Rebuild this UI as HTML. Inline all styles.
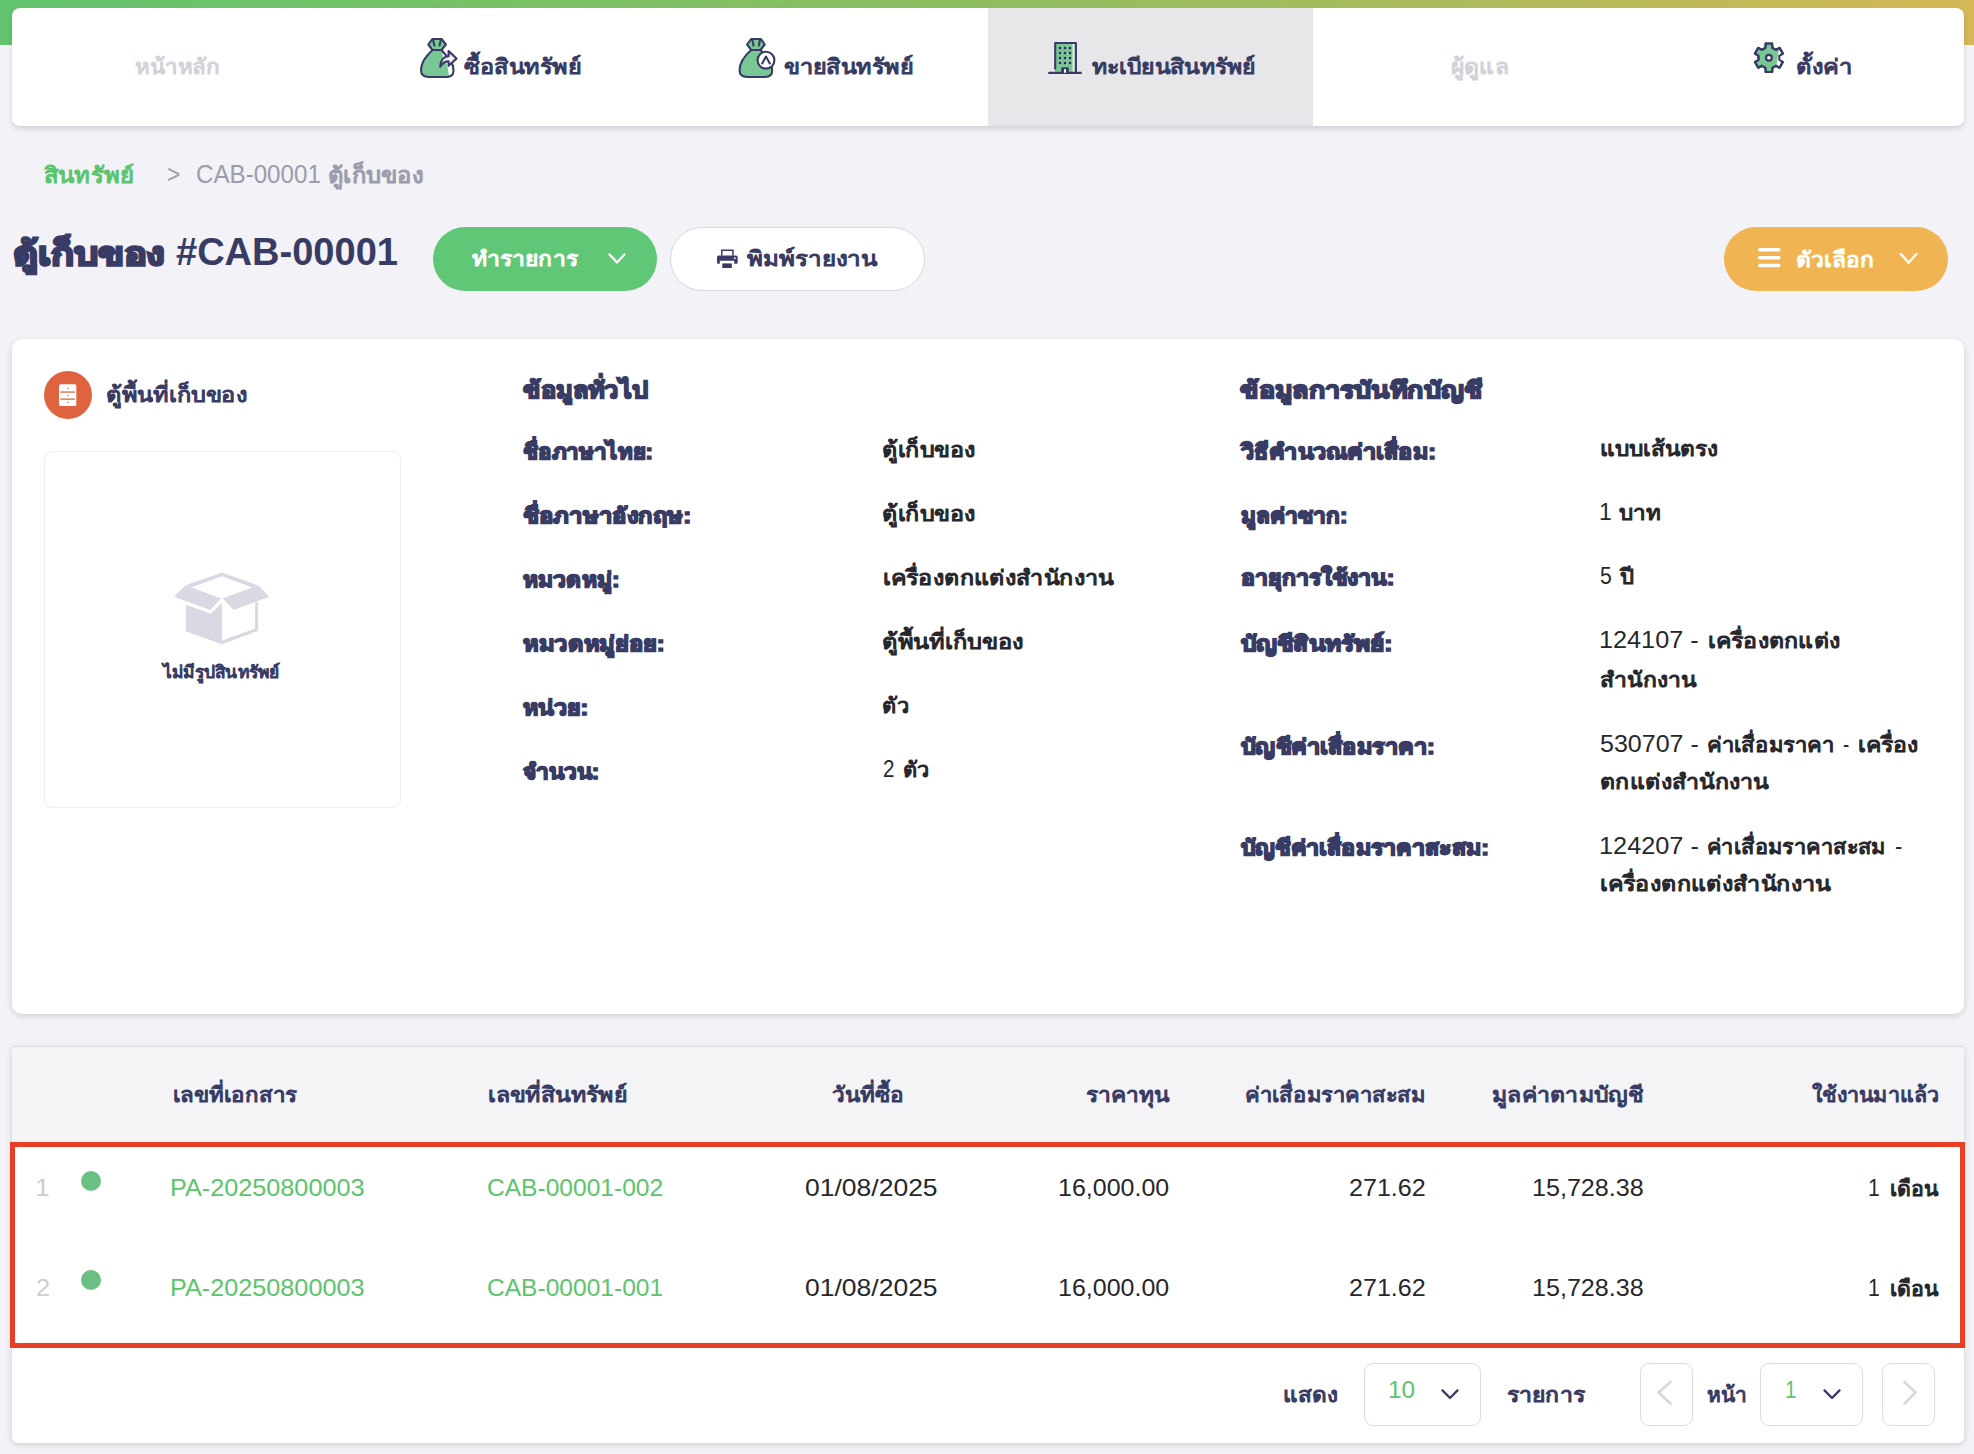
<!DOCTYPE html>
<html lang="th"><head><meta charset="utf-8"><title>ตู้เก็บของ #CAB-00001</title><style>
*{box-sizing:border-box;margin:0;padding:0}
html,body{width:1974px;height:1454px;overflow:hidden}
body{background:#f2f2f7;font-family:"Liberation Sans",sans-serif;position:relative}
.a{position:absolute}
.t{position:absolute;white-space:nowrap;line-height:1;transform-origin:0 0}
.topbar{left:0;top:0;width:1974px;height:45px;background:linear-gradient(90deg,#62c46e 0%,#8fbe60 50%,#b0bb5c 76%,#d5b756 100%)}
.nav{left:12px;top:8px;width:1952px;height:118px;background:#fff;border-radius:8px;box-shadow:0 3px 5px rgba(40,40,60,.16);overflow:hidden;display:flex}
.nav .tab{width:325.33px;height:118px;flex:none}
.nav .tab.on{background:#e7e7e9}
.btn{top:227px;height:64px;border-radius:32px}
.card{background:#fff;box-shadow:0 2px 6px rgba(0,0,0,.15)}
.pbox{top:1363px;height:63px;border:1px solid #dcdce8;border-radius:9px;background:#fff}
</style></head><body>
<div class="a topbar"></div>
<nav class="a nav"><div class="tab"></div><div class="tab"></div><div class="tab"></div><div class="tab on"></div><div class="tab"></div><div class="tab"></div></nav>
<div class="a btn" style="left:433px;width:224px;background:#5fc776"></div>
<div class="a btn" style="left:670px;width:255px;background:#fff;border:1px solid #d9d8e4"></div>
<div class="a btn" style="left:1724px;width:224px;background:#f0b552"></div>
<div class="a card" style="left:12px;top:339px;width:1952px;height:675px;border-radius:10px"></div>
<div class="a" style="left:44px;top:451px;width:357px;height:357px;border:1px solid #eeeef3;border-radius:8px"></div>
<div class="a card" style="left:12px;top:1046px;width:1952px;height:397px;border-radius:0 0 6px 6px"></div>
<div class="a" style="left:12px;top:1046px;width:1952px;height:96px;background:#f4f4f7;border-top:1px solid #dcdce8"></div>
<div class="a" style="left:10px;top:1142px;width:1955px;height:206px;border:5px solid #e83e25;background:#fff"></div>
<div class="a pbox" style="left:1364px;width:117px"></div>
<div class="a pbox" style="left:1640px;width:53px"></div>
<div class="a pbox" style="left:1760px;width:103px"></div>
<div class="a pbox" style="left:1882px;width:53px"></div>
<svg class="a" style="left:418px;top:36px" width="42" height="44" viewBox="0 0 42 44" ><path d="M14.5,14 C9,19 3,26 3,34 C3,39.5 6.5,41 11,41 L28.5,41 C33,41 35.5,39 35.5,34.5 C35.5,31 34.5,28 33,25.5 L23.5,14 Z" fill="#79c794"/><path d="M26,16.5 L33,25 C34.5,28 35.3,31 35.3,34.5 C35.3,38 34,40 31,40.6 C30.5,34 29,26 24,18 Z" fill="#fff"/><path d="M14.5,14 C9,19 3,26 3,34 C3,39.5 6.5,41 11,41 L28.5,41 C33,41 35.5,39 35.5,34.5 C35.5,31 34.5,28 33,25.5 M23.5,14 L29.5,21" fill="none" stroke="#393a68" stroke-width="2.1" stroke-linejoin="round" stroke-linecap="round"/><path d="M14.3,3 L23.6,3 L27.9,8.5 L23.5,14 L14.5,14 L10.3,8.5 Z" fill="#79c794" fill="none" stroke="#393a68" stroke-width="2.1" stroke-linejoin="round" stroke-linecap="round"/><path d="M15.2,4.6 L16.4,9.6 M22.7,4.6 L21.5,9.6" fill="none" stroke="#393a68" stroke-width="2.1" stroke-linejoin="round" stroke-linecap="round"/><path d="M22.2,30.6 C22.4,24.5 25.8,20.6 30.6,20.2 L30.6,15 L38.5,22.6 L30.6,29.8 L30.6,25.4 C27,25.4 24,27.6 22.2,30.6 Z" fill="#f2f2f4" fill="none" stroke="#393a68" stroke-width="2.1" stroke-linejoin="round" stroke-linecap="round"/></svg>
<svg class="a" style="left:737px;top:36px" width="42" height="44" viewBox="0 0 42 44" ><path d="M14.2,14 C8.5,19 2.6,26 2.6,34 C2.6,39.5 6,41 10.5,41 L28,41 C32.5,41 35.2,39 35.2,34.5 C35.2,31 34,28 32.5,25.5 L23.5,14 Z" fill="#79c794" fill="none" stroke="#393a68" stroke-width="2.1" stroke-linejoin="round" stroke-linecap="round"/><path d="M14.1,3 L24,3 L27.7,8.5 L23.5,14 L14.2,14 L10.1,8.5 Z" fill="#79c794" fill="none" stroke="#393a68" stroke-width="2.1" stroke-linejoin="round" stroke-linecap="round"/><path d="M15.4,4.6 L16.5,9.6 M22.9,4.6 L21.8,9.6" fill="none" stroke="#393a68" stroke-width="2.1" stroke-linejoin="round" stroke-linecap="round"/><circle cx="29" cy="24.2" r="8.4" fill="#fff" fill="none" stroke="#393a68" stroke-width="2.1" stroke-linejoin="round" stroke-linecap="round"/><path d="M25.2,27.4 L29,20.6 L32.8,27.4" fill="none" stroke="#393a68" stroke-width="2.1" stroke-linejoin="round" stroke-linecap="round"/></svg>
<svg class="a" style="left:1048px;top:40px" width="34" height="35" viewBox="0 0 34 35" ><rect x="7" y="3" width="20" height="30" fill="#79c794"/><rect x="24.6" y="3" width="2" height="30" fill="#eef2ee"/><path d="M7.2,28.7 L7.2,3 L27.9,3 L27.9,32.9 M1.1,32.9 L32.9,32.9" fill="none" stroke="#393a68" stroke-width="2.1" stroke-linejoin="round" stroke-linecap="round"/><rect x="10.9" y="6.9" width="2.2" height="2.2" fill="#2e2b5c"/><rect x="10.9" y="11.9" width="2.2" height="2.2" fill="#2e2b5c"/><rect x="10.9" y="16.9" width="2.2" height="2.2" fill="#2e2b5c"/><rect x="10.9" y="21.9" width="2.2" height="2.2" fill="#2e2b5c"/><rect x="15.9" y="6.9" width="2.2" height="2.2" fill="#2e2b5c"/><rect x="15.9" y="11.9" width="2.2" height="2.2" fill="#2e2b5c"/><rect x="15.9" y="16.9" width="2.2" height="2.2" fill="#2e2b5c"/><rect x="15.9" y="21.9" width="2.2" height="2.2" fill="#2e2b5c"/><rect x="20.9" y="6.9" width="2.2" height="2.2" fill="#2e2b5c"/><rect x="20.9" y="11.9" width="2.2" height="2.2" fill="#2e2b5c"/><rect x="20.9" y="16.9" width="2.2" height="2.2" fill="#2e2b5c"/><rect x="20.9" y="21.9" width="2.2" height="2.2" fill="#2e2b5c"/><path d="M13.2,33 L13.2,28.2 Q13.2,27.3 14.1,27.3 L19.9,27.3 Q20.8,27.3 20.8,28.2 L20.8,33 Z" fill="#393a68"/><rect x="16" y="29.2" width="2" height="3.5" fill="#fff"/></svg>
<svg class="a" style="left:1752px;top:40px" width="34" height="36" viewBox="0 0 34 36" ><polygon points="13.45,7.78 13.62,3.57 20.18,3.57 20.35,7.78 23.85,9.80 27.58,7.84 30.86,13.53 27.31,15.78 27.31,19.82 30.86,22.07 27.58,27.76 23.85,25.80 20.35,27.82 20.18,32.03 13.62,32.03 13.45,27.82 9.95,25.80 6.22,27.76 2.94,22.07 6.49,19.82 6.49,15.78 2.94,13.53 6.22,7.84 9.95,9.80" fill="#79c794" fill="none" stroke="#393a68" stroke-width="2.1" stroke-linejoin="round" stroke-linecap="round"/><path d="M26.8,10.5 L24.6,24.8 L27,26.2 L30,20 L28.4,11.5 Z" fill="#fff"/><polygon points="13.45,7.78 13.62,3.57 20.18,3.57 20.35,7.78 23.85,9.80 27.58,7.84 30.86,13.53 27.31,15.78 27.31,19.82 30.86,22.07 27.58,27.76 23.85,25.80 20.35,27.82 20.18,32.03 13.62,32.03 13.45,27.82 9.95,25.80 6.22,27.76 2.94,22.07 6.49,19.82 6.49,15.78 2.94,13.53 6.22,7.84 9.95,9.80" fill="none" fill="none" stroke="#393a68" stroke-width="2.1" stroke-linejoin="round" stroke-linecap="round"/><circle cx="16.9" cy="17.8" r="2.9" fill="#fff" stroke="#393a68" stroke-width="2.2"/></svg>
<svg class="a" style="left:715px;top:247px" width="25" height="23" viewBox="0 0 25 23" ><path d="M6,2.6 L18.7,2.6 L18.7,8.4 L17.2,8.4 L17.2,4.1 L7.5,4.1 L7.5,8.4 L6,8.4 Z" fill="#393a68"/><path d="M3.6,8.4 L21,8.4 Q22.7,8.4 22.7,10.2 L22.7,15.5 Q22.7,16.8 21.2,16.8 L19.2,16.8 L19.2,13.7 L4.8,13.7 L4.8,16.8 L3.4,16.8 Q2,16.8 2,15.3 L2,10.2 Q2,8.4 3.6,8.4 Z" fill="#393a68"/><rect x="19" y="10.4" width="1.6" height="1.6" fill="#fff"/><rect x="7.3" y="16.4" width="9.5" height="4.6" fill="#393a68"/></svg>
<svg class="a" style="left:607px;top:251px" width="20" height="16" viewBox="0 0 20 16" ><path d="M2.5,3.5 L10,11.5 L17.5,3.5" fill="none" stroke="#fff" stroke-width="2.3" stroke-linecap="round" stroke-linejoin="round"/></svg>
<svg class="a" style="left:1898px;top:251px" width="20" height="16" viewBox="0 0 20 16" ><path d="M2.8,3 L10.6,11.8 L18.4,3" fill="none" stroke="#fff" stroke-width="2.3" stroke-linecap="round" stroke-linejoin="round"/></svg>
<svg class="a" style="left:1756px;top:246px" width="27" height="23" viewBox="0 0 27 23" ><rect x="2" y="2" width="22.5" height="3.4" rx="1.7" fill="#fff"/><rect x="2" y="10" width="22.5" height="3.4" rx="1.7" fill="#fff"/><rect x="2" y="17.8" width="22.5" height="3.4" rx="1.7" fill="#fff"/></svg>
<div class="a" style="left:44px;top:371px;width:48px;height:48px;border-radius:50%;background:#e0633f"></div>
<svg class="a" style="left:56px;top:382px" width="24" height="26" viewBox="0 0 24 26" ><rect x="3" y="2.3" width="17.3" height="21.7" rx="1.6" fill="#fff"/><rect x="4.4" y="9.4" width="14.5" height="1.3" fill="#e0633f"/><rect x="4.4" y="16.5" width="14.5" height="1.3" fill="#e0633f"/><circle cx="11.8" cy="6.5" r="0.8" fill="#e0633f"/><circle cx="11.8" cy="13.7" r="0.8" fill="#e0633f"/><circle cx="11.8" cy="20.2" r="0.8" fill="#e0633f"/></svg>
<svg class="a" style="left:160px;top:560px" width="120" height="100" viewBox="0 0 120 100" ><path d="M25.4,25.3 L61.9,12.4 L98.3,25.3 L92.3,27.5 L61.9,16.2 L31.5,27.5 Z" fill="#d9d9e4"/><path d="M14.1,36.8 L25.4,25.3 L31.5,27.5 L61.2,38.2 L50.3,50.1 Z" fill="#d9d9e4"/><path d="M62.6,38.2 L92.3,27.5 L98.3,25.3 L109.4,36.8 L73.6,49.9 Z" fill="#d9d9e4"/><path d="M25.8,44.7 L50.9,53.8 L61.9,42.8 L61.9,84.2 L25.8,71.2 Z" fill="#d9d9e4"/><path d="M61.9,80.6 L95.1,68.6 L95.1,42.9 L98.1,41.8 L98.1,70.9 L61.9,84.2 Z" fill="#d9d9e4"/></svg>
<div class="a" style="left:80.5px;top:1171px;width:20px;height:20px;border-radius:50%;background:#6cbf82"></div>
<div class="a" style="left:80.5px;top:1270px;width:20px;height:20px;border-radius:50%;background:#6cbf82"></div>
<svg class="a" style="left:1438px;top:1385px" width="24" height="20" viewBox="0 0 24 20" ><path d="M4.5,5.4 L12,13 L19.5,5.4" fill="none" stroke="#393a68" stroke-width="2.3" stroke-linecap="round" stroke-linejoin="round"/></svg>
<svg class="a" style="left:1820px;top:1385px" width="24" height="20" viewBox="0 0 24 20" ><path d="M4.5,5.4 L12,13 L19.5,5.4" fill="none" stroke="#393a68" stroke-width="2.3" stroke-linecap="round" stroke-linejoin="round"/></svg>
<svg class="a" style="left:1654px;top:1379px" width="24" height="30" viewBox="0 0 24 30" ><path d="M16.5,3 L4.5,13.5 L16.5,24.5" fill="none" stroke="#d8d8e2" stroke-width="2.8" stroke-linecap="round" stroke-linejoin="round"/></svg>
<svg class="a" style="left:1896px;top:1379px" width="24" height="30" viewBox="0 0 24 30" ><path d="M8.5,3 L19.5,13.5 L8.5,24.5" fill="none" stroke="#d8d8e2" stroke-width="2.8" stroke-linecap="round" stroke-linejoin="round"/></svg>
<span class="t" id="nav_home" style="left:135.07px;top:56.31px;font-size:21px;color:#d2d2d8;-webkit-text-stroke-width:1.1px;--w:85.03px;transform:scaleX(0.6749)">หน้าหลัก</span>
<span class="t" id="nav_buy" style="left:463.63px;top:56.31px;font-size:21px;color:#383b64;-webkit-text-stroke-width:1.1px;--w:117.22px;transform:scaleX(0.5725)">ซื้อสินทรัพย์</span>
<span class="t" id="nav_sell" style="left:784.47px;top:56.31px;font-size:21px;color:#383b64;-webkit-text-stroke-width:1.1px;--w:129.38px;transform:scaleX(0.6846)">ขายสินทรัพย์</span>
<span class="t" id="nav_reg" style="left:1091.53px;top:56.31px;font-size:21px;color:#383b64;-webkit-text-stroke-width:1.1px;--w:163.50px;transform:scaleX(0.6488)">ทะเบียนสินทรัพย์</span>
<span class="t" id="nav_admin" style="left:1450.67px;top:56.31px;font-size:21px;color:#d2d2d8;-webkit-text-stroke-width:1.1px;--w:57.79px;transform:scaleX(0.5242)">ผู้ดูแล</span>
<span class="t" id="nav_set" style="left:1796.21px;top:56.31px;font-size:21px;color:#383b64;-webkit-text-stroke-width:1.1px;--w:56.25px;transform:scaleX(0.5102)">ตั้งค่า</span>
<span class="t" id="bc_1" style="left:44.35px;top:165.00px;font-size:22px;color:#5cc46c;-webkit-text-stroke-width:1.1px;--w:90.34px;transform:scaleX(0.6084)">สินทรัพย์</span>
<span class="t" id="bc_gt" style="left:166.93px;top:161.01px;font-size:26px;color:#9c9cac;--w:13.18px;transform:scaleX(0.8676)">></span>
<span class="t" id="bc_2a" style="left:196.35px;top:161.01px;font-size:26px;color:#9c9cac;--w:124.82px;transform:scaleX(0.9286)">CAB-00001</span>
<span class="t" id="bc_2b" style="left:328.36px;top:165.00px;font-size:22px;color:#9c9cac;-webkit-text-stroke-width:1.1px;--w:95.52px;transform:scaleX(0.5789)">ตู้เก็บของ</span>
<span class="t" id="title_a" style="left:12.77px;top:238.00px;font-size:32px;color:#383b64;font-weight:700;-webkit-text-stroke-width:2.4px;--w:152.41px;transform:scaleX(0.6350)">ตู้เก็บของ</span>
<span class="t" id="title_b" style="left:176.17px;top:232.01px;font-size:39px;color:#383b64;font-weight:700;--w:221.96px;transform:scaleX(0.9751)">#CAB-00001</span>
<span class="t" id="btn_act" style="left:471.87px;top:248.01px;font-size:21px;color:#ffffff;-webkit-text-stroke-width:1.1px;--w:105.71px;transform:scaleX(0.7457)">ทำรายการ</span>
<span class="t" id="btn_print" style="left:747.38px;top:248.01px;font-size:21px;color:#383b64;-webkit-text-stroke-width:1.1px;--w:129.94px;transform:scaleX(0.7500)">พิมพ์รายงาน</span>
<span class="t" id="btn_opt" style="left:1795.58px;top:248.51px;font-size:21px;color:#ffffff;-webkit-text-stroke-width:1.1px;--w:77.84px;transform:scaleX(0.6178)">ตัวเลือก</span>
<span class="t" id="cat" style="left:106.05px;top:383.81px;font-size:21px;color:#383b64;-webkit-text-stroke-width:1.1px;--w:141.14px;transform:scaleX(0.5271)">ตู้พื้นที่เก็บของ</span>
<span class="t" id="noimg" style="left:162.91px;top:663.81px;font-size:17px;color:#383b64;-webkit-text-stroke-width:1.1px;--w:116.61px;transform:scaleX(0.5380)">ไม่มีรูปสินทรัพย์</span>
<span class="t" id="h_gen" style="left:522.95px;top:379.01px;font-size:23px;color:#383b64;font-weight:700;-webkit-text-stroke-width:1.72px;--w:125.44px;transform:scaleX(0.6060)">ข้อมูลทั่วไป</span>
<span class="t" id="l_th" style="left:522.93px;top:440.81px;font-size:21px;color:#383b64;font-weight:700;-webkit-text-stroke-width:1.57px;--w:129.98px;transform:scaleX(0.7211)">ชื่อภาษาไทย:</span>
<span class="t" id="l_en" style="left:522.91px;top:504.71px;font-size:21px;color:#383b64;font-weight:700;-webkit-text-stroke-width:1.57px;--w:168.19px;transform:scaleX(0.7393)">ชื่อภาษาอังกฤษ:</span>
<span class="t" id="l_cat" style="left:522.93px;top:569.01px;font-size:21px;color:#383b64;font-weight:700;-webkit-text-stroke-width:1.57px;--w:96.53px;transform:scaleX(0.7258)">หมวดหมู่:</span>
<span class="t" id="l_sub" style="left:522.92px;top:632.61px;font-size:21px;color:#383b64;font-weight:700;-webkit-text-stroke-width:1.57px;--w:141.73px;transform:scaleX(0.7231)">หมวดหมู่ย่อย:</span>
<span class="t" id="l_unit" style="left:522.90px;top:696.71px;font-size:21px;color:#383b64;font-weight:700;-webkit-text-stroke-width:1.57px;--w:65.17px;transform:scaleX(0.7600)">หน่วย:</span>
<span class="t" id="l_qty" style="left:522.91px;top:760.71px;font-size:21px;color:#383b64;font-weight:700;-webkit-text-stroke-width:1.57px;--w:76.17px;transform:scaleX(0.7504)">จำนวน:</span>
<span class="t" id="v_th" style="left:881.69px;top:438.91px;font-size:21px;color:#26272c;-webkit-text-stroke-width:1.1px;--w:93.11px;transform:scaleX(0.5912)">ตู้เก็บของ</span>
<span class="t" id="v_en" style="left:881.69px;top:502.81px;font-size:21px;color:#26272c;-webkit-text-stroke-width:1.1px;--w:93.11px;transform:scaleX(0.5912)">ตู้เก็บของ</span>
<span class="t" id="v_cat" style="left:882.55px;top:566.61px;font-size:21px;color:#26272c;-webkit-text-stroke-width:1.1px;--w:230.61px;transform:scaleX(0.6655)">เครื่องตกแต่งสำนักงาน</span>
<span class="t" id="v_sub" style="left:881.80px;top:630.81px;font-size:21px;color:#26272c;-webkit-text-stroke-width:1.1px;--w:141.71px;transform:scaleX(0.5293)">ตู้พื้นที่เก็บของ</span>
<span class="t" id="v_unit" style="left:881.69px;top:694.81px;font-size:21px;color:#26272c;-webkit-text-stroke-width:1.1px;--w:26.93px;transform:scaleX(0.5700)">ตัว</span>
<span class="t" id="v_qty_a" style="left:882.90px;top:756.71px;font-size:24px;color:#26272c;--w:11.46px;transform:scaleX(0.8579)">2</span>
<span class="t" id="v_qty_b" style="left:902.62px;top:758.71px;font-size:21px;color:#26272c;-webkit-text-stroke-width:1.1px;--w:26.92px;transform:scaleX(0.5697)">ตัว</span>
<span class="t" id="h_acc" style="left:1240.36px;top:378.61px;font-size:23px;color:#383b64;font-weight:700;-webkit-text-stroke-width:1.72px;--w:243.07px;transform:scaleX(0.7045)">ข้อมูลการบันทึกบัญชี</span>
<span class="t" id="r_l1" style="left:1241.11px;top:441.01px;font-size:21px;color:#383b64;font-weight:700;-webkit-text-stroke-width:1.57px;--w:194.99px;transform:scaleX(0.6367)">วิธีคำนวณค่าเสื่อม:</span>
<span class="t" id="r_l2" style="left:1240.66px;top:504.61px;font-size:21px;color:#383b64;font-weight:700;-webkit-text-stroke-width:1.57px;--w:106.54px;transform:scaleX(0.7162)">มูลค่าซาก:</span>
<span class="t" id="r_l3" style="left:1240.66px;top:567.31px;font-size:21px;color:#383b64;font-weight:700;-webkit-text-stroke-width:1.57px;--w:153.35px;transform:scaleX(0.7242)">อายุการใช้งาน:</span>
<span class="t" id="r_l4" style="left:1241.26px;top:632.91px;font-size:21px;color:#383b64;font-weight:700;-webkit-text-stroke-width:1.57px;--w:151.41px;transform:scaleX(0.6655)">บัญชีสินทรัพย์:</span>
<span class="t" id="r_l5" style="left:1240.76px;top:736.01px;font-size:21px;color:#383b64;font-weight:700;-webkit-text-stroke-width:1.57px;--w:193.84px;transform:scaleX(0.6673)">บัญชีค่าเสื่อมราคา:</span>
<span class="t" id="r_l6" style="left:1240.71px;top:837.41px;font-size:21px;color:#383b64;font-weight:700;-webkit-text-stroke-width:1.57px;--w:248.06px;transform:scaleX(0.7017)">บัญชีค่าเสื่อมราคาสะสม:</span>
<span class="t" id="r_v1" style="left:1599.87px;top:438.21px;font-size:21px;color:#26272c;-webkit-text-stroke-width:1.1px;--w:117.74px;transform:scaleX(0.7475)">แบบเส้นตรง</span>
<span class="t" id="r_v2a" style="left:1598.90px;top:500.10px;font-size:24px;color:#26272c;--w:12.82px;transform:scaleX(0.9595)">1</span>
<span class="t" id="r_v2b" style="left:1619.37px;top:502.11px;font-size:21px;color:#26272c;-webkit-text-stroke-width:1.1px;--w:41.71px;transform:scaleX(0.8828)">บาท</span>
<span class="t" id="r_v3a" style="left:1600.03px;top:564.01px;font-size:24px;color:#26272c;--w:11.75px;transform:scaleX(0.8792)">5</span>
<span class="t" id="r_v3b" style="left:1620.02px;top:566.01px;font-size:21px;color:#26272c;-webkit-text-stroke-width:1.1px;--w:13.69px;transform:scaleX(0.4345)">ปี</span>
<span class="t" id="r_v4a1" style="left:1599.16px;top:628.10px;font-size:24px;color:#26272c;--w:99.64px;transform:scaleX(1.0516)">124107 -</span>
<span class="t" id="r_v4a2" style="left:1707.75px;top:630.11px;font-size:21px;color:#26272c;-webkit-text-stroke-width:1.1px;--w:132.30px;transform:scaleX(0.6462)">เครื่องตกแต่ง</span>
<span class="t" id="r_v4b" style="left:1599.98px;top:669.21px;font-size:21px;color:#26272c;-webkit-text-stroke-width:1.1px;--w:96.11px;transform:scaleX(0.6780)">สำนักงาน</span>
<span class="t" id="r_v5a1" style="left:1600.46px;top:732.21px;font-size:24px;color:#26272c;--w:98.79px;transform:scaleX(1.0426)">530707 -</span>
<span class="t" id="r_v5a2" style="left:1706.58px;top:734.21px;font-size:21px;color:#26272c;-webkit-text-stroke-width:1.1px;--w:127.43px;transform:scaleX(0.6224)">ค่าเสื่อมราคา</span>
<span class="t" id="r_v5a3" style="left:1843.20px;top:732.21px;font-size:24px;color:#26272c;--w:6.25px;transform:scaleX(0.7810)">-</span>
<span class="t" id="r_v5a4" style="left:1858.30px;top:734.21px;font-size:21px;color:#26272c;-webkit-text-stroke-width:1.1px;--w:60.32px;transform:scaleX(0.5471)">เครื่อง</span>
<span class="t" id="r_v5b" style="left:1599.68px;top:771.21px;font-size:21px;color:#26272c;-webkit-text-stroke-width:1.1px;--w:168.69px;transform:scaleX(0.7140)">ตกแต่งสำนักงาน</span>
<span class="t" id="r_v6a1" style="left:1598.53px;top:834.01px;font-size:24px;color:#26272c;--w:99.84px;transform:scaleX(1.0538)">124207 -</span>
<span class="t" id="r_v6a2" style="left:1706.51px;top:836.01px;font-size:21px;color:#26272c;-webkit-text-stroke-width:1.1px;--w:178.78px;transform:scaleX(0.6677)">ค่าเสื่อมราคาสะสม</span>
<span class="t" id="r_v6a3" style="left:1895.31px;top:834.01px;font-size:24px;color:#26272c;--w:7.28px;transform:scaleX(0.9095)">-</span>
<span class="t" id="r_v6b" style="left:1599.75px;top:872.61px;font-size:21px;color:#26272c;-webkit-text-stroke-width:1.1px;--w:230.61px;transform:scaleX(0.6655)">เครื่องตกแต่งสำนักงาน</span>
<span class="t" id="th_doc" style="left:172.57px;top:1083.81px;font-size:21px;color:#383b64;-webkit-text-stroke-width:1.1px;--w:124.12px;transform:scaleX(0.6567)">เลขที่เอกสาร</span>
<span class="t" id="th_asset" style="left:487.62px;top:1083.81px;font-size:21px;color:#383b64;-webkit-text-stroke-width:1.1px;--w:138.95px;transform:scaleX(0.5882)">เลขที่สินทรัพย์</span>
<span class="t" id="th_date" style="left:831.77px;top:1083.81px;font-size:21px;color:#383b64;-webkit-text-stroke-width:1.1px;--w:71.69px;transform:scaleX(0.4552)">วันที่ซื้อ</span>
<span class="t" id="th_cost" style="left:1085.90px;top:1083.81px;font-size:21px;color:#383b64;-webkit-text-stroke-width:1.1px;--w:83.34px;transform:scaleX(0.7559)">ราคาทุน</span>
<span class="t" id="th_dep" style="left:1244.51px;top:1083.81px;font-size:21px;color:#383b64;-webkit-text-stroke-width:1.1px;--w:180.50px;transform:scaleX(0.6741)">ค่าเสื่อมราคาสะสม</span>
<span class="t" id="th_book" style="left:1492.41px;top:1083.81px;font-size:21px;color:#383b64;-webkit-text-stroke-width:1.1px;--w:151.31px;transform:scaleX(0.6862)">มูลค่าตามบัญชี</span>
<span class="t" id="th_used" style="left:1811.79px;top:1083.81px;font-size:21px;color:#383b64;-webkit-text-stroke-width:1.1px;--w:127.69px;transform:scaleX(0.6756)">ใช้งานมาแล้ว</span>
<span class="t" id="r1_idx" style="left:34.80px;top:1176.41px;font-size:24px;color:#cdcdd3;--w:14.83px;transform:scaleX(1.1099)">1</span>
<span class="t" id="r1_doc" style="left:170.27px;top:1176.41px;font-size:24px;color:#5cc46c;--w:194.54px;transform:scaleX(1.0512)">PA-20250800003</span>
<span class="t" id="r1_asset" style="left:486.53px;top:1176.41px;font-size:24px;color:#5cc46c;--w:176.15px;transform:scaleX(1.0234)">CAB-00001-002</span>
<span class="t" id="r1_date" style="left:804.82px;top:1176.41px;font-size:24px;color:#26272c;--w:132.62px;transform:scaleX(1.1040)">01/08/2025</span>
<span class="t" id="r1_cost" style="left:1058.18px;top:1176.41px;font-size:24px;color:#26272c;--w:111.21px;transform:scaleX(1.0414)">16,000.00</span>
<span class="t" id="r1_dep" style="left:1349.31px;top:1176.41px;font-size:24px;color:#26272c;--w:76.66px;transform:scaleX(1.0444)">271.62</span>
<span class="t" id="r1_book" style="left:1532.13px;top:1176.41px;font-size:24px;color:#26272c;--w:111.66px;transform:scaleX(1.0457)">15,728.38</span>
<span class="t" id="r1_used_a" style="left:1868.26px;top:1176.41px;font-size:24px;color:#26272c;--w:11.83px;transform:scaleX(0.8859)">1</span>
<span class="t" id="r1_used_b" style="left:1889.57px;top:1178.41px;font-size:21px;color:#26272c;-webkit-text-stroke-width:1.1px;--w:48.48px;transform:scaleX(0.6156)">เดือน</span>
<span class="t" id="r2_idx" style="left:35.99px;top:1275.71px;font-size:24px;color:#cdcdd3;--w:14.09px;transform:scaleX(1.0548)">2</span>
<span class="t" id="r2_doc" style="left:170.27px;top:1275.71px;font-size:24px;color:#5cc46c;--w:194.54px;transform:scaleX(1.0512)">PA-20250800003</span>
<span class="t" id="r2_asset" style="left:486.53px;top:1275.71px;font-size:24px;color:#5cc46c;--w:176.15px;transform:scaleX(1.0234)">CAB-00001-001</span>
<span class="t" id="r2_date" style="left:804.82px;top:1275.71px;font-size:24px;color:#26272c;--w:132.62px;transform:scaleX(1.1040)">01/08/2025</span>
<span class="t" id="r2_cost" style="left:1058.18px;top:1275.71px;font-size:24px;color:#26272c;--w:111.21px;transform:scaleX(1.0414)">16,000.00</span>
<span class="t" id="r2_dep" style="left:1349.31px;top:1275.71px;font-size:24px;color:#26272c;--w:76.66px;transform:scaleX(1.0444)">271.62</span>
<span class="t" id="r2_book" style="left:1532.13px;top:1275.71px;font-size:24px;color:#26272c;--w:111.66px;transform:scaleX(1.0457)">15,728.38</span>
<span class="t" id="r2_used_a" style="left:1868.26px;top:1275.71px;font-size:24px;color:#26272c;--w:11.83px;transform:scaleX(0.8859)">1</span>
<span class="t" id="r2_used_b" style="left:1889.57px;top:1277.71px;font-size:21px;color:#26272c;-webkit-text-stroke-width:1.1px;--w:48.48px;transform:scaleX(0.6156)">เดือน</span>
<span class="t" id="pg_show" style="left:1283.18px;top:1383.61px;font-size:21px;color:#383b64;-webkit-text-stroke-width:1.1px;--w:54.74px;transform:scaleX(0.8689)">แสดง</span>
<span class="t" id="pg_10" style="left:1388.10px;top:1377.71px;font-size:24px;color:#5cc46c;--w:27.15px;transform:scaleX(1.0166)">10</span>
<span class="t" id="pg_items" style="left:1506.79px;top:1383.61px;font-size:21px;color:#383b64;-webkit-text-stroke-width:1.1px;--w:77.84px;transform:scaleX(0.8237)">รายการ</span>
<span class="t" id="pg_page" style="left:1706.74px;top:1383.51px;font-size:21px;color:#383b64;-webkit-text-stroke-width:1.1px;--w:39.84px;transform:scaleX(0.6324)">หน้า</span>
<span class="t" id="pg_1" style="left:1785.02px;top:1378.31px;font-size:24px;color:#5cc46c;--w:11.39px;transform:scaleX(0.8523)">1</span>
<script>(function(){var e=document.querySelectorAll('.t'),n=[],i,w;
for(i=0;i<e.length;i++)e[i].style.transform='none';
for(i=0;i<e.length;i++)n.push(e[i].getBoundingClientRect().width);
for(i=0;i<e.length;i++){w=parseFloat(getComputedStyle(e[i]).getPropertyValue('--w'));if(w>0&&n[i]>0)e[i].style.transform='scaleX('+(w/n[i]).toFixed(4)+')';}})();</script>
</body></html>
